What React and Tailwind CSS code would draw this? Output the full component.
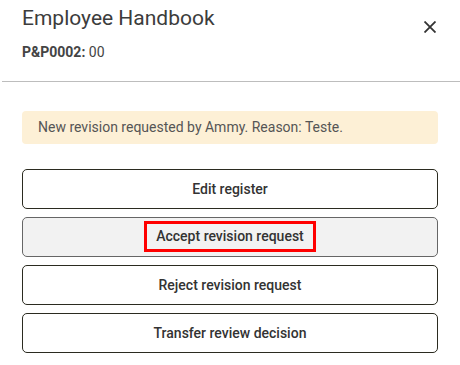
import React from "react";

export default function App() {
  const btn =
    "h-[40px] w-full rounded-[5px] border text-[14px] font-medium text-[#333] flex items-center justify-center";
  return (
    <div className="w-[460px] h-[365px] bg-white overflow-hidden" style={{ fontFamily: "Roboto, 'Noto Sans', sans-serif" }}>
      <div className="flex justify-between pl-[22px] pr-[24px] h-[81px]">
        <div className="pt-[4px]">
          <div className="text-[21px] leading-[28px] text-[#3c3c3c]">Employee Handbook</div>
          <div className="mt-[12px] text-[14px] leading-[16px] text-[#444]">
            <span className="font-bold">P&amp;P0002:</span> 00
          </div>
        </div>
        <div className="pt-[21px]">
          <svg width="12" height="12" viewBox="0 0 12 12">
            <path d="M0.5 0.5L11.5 11.5M11.5 0.5L0.5 11.5" stroke="#333" strokeWidth="1.8" />
          </svg>
        </div>
      </div>
      <div className="ml-[2px] h-px bg-[#bdbdbd]" />
      <div className="px-[22px] pt-[29px]">
        <div className="h-[33px] rounded-[4px] bg-[#fdf0d6] pl-[16px] flex items-center text-[14px] text-[#555]">
          New revision requested by Ammy. Reason: Teste.
        </div>
        <div className="mt-[25px] flex flex-col gap-[8px]">
          <button className={btn + " border-[#2b2b20] bg-white"}>Edit register</button>
          <button className={btn + " border-[#666] bg-[#f2f2f2]"}>
            <span className="border-[3px] border-[#ff0000] px-[9px] h-[31px] mb-[2px] flex items-center">Accept revision request</span>
          </button>
          <button className={btn + " border-[#2b2b20] bg-white"}>Reject revision request</button>
          <button className={btn + " border-[#2b2b20] bg-white"}>Transfer review decision</button>
        </div>
      </div>
    </div>
  );
}
